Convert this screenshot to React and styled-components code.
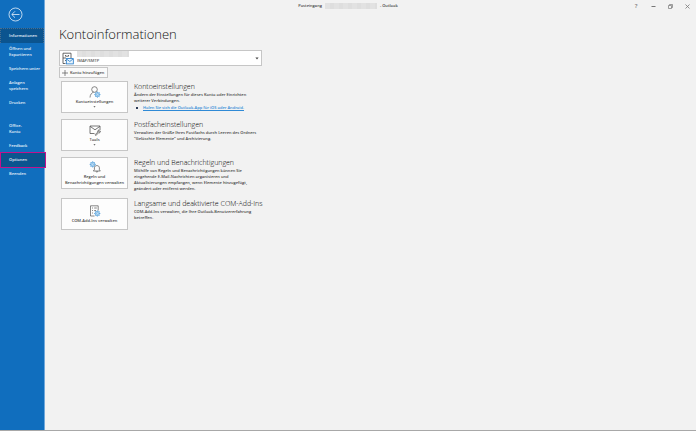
import React from 'react';
import styled, { createGlobalStyle } from 'styled-components';

const GlobalStyle = createGlobalStyle`
  * { box-sizing: border-box; }
  html, body { margin: 0; background: #F2F2F2; }
  body {
    font-family: 'Open Sans', 'Noto Sans', sans-serif;
    font-size: 4px;
    font-weight: 600;
    line-height: 6px;
    color: #444;
  }
  button, select { font: inherit; color: inherit; }
  h1, h2, p, ul { margin: 0; padding: 0; }
  svg { display: block; fill: none; flex-shrink: 0; }
`;

const Layout = styled.div`
  display: flex;
  min-height: 100vh;
  border-bottom: 1px solid #A8A8A8;
`;

const Sidebar = styled.nav`
  width: 45px;
  flex-shrink: 0;
  background: #106EBE;
  border-right: 1px solid #6FA8DC;
  color: #FFF;
`;

const BackButton = styled.button`
  display: block;
  padding: 0;
  margin: 7px 0 6px 8px;
  border: none;
  background: transparent;
`;

const NavLink = styled.a`
  display: block;
  padding: 4px 0 4px 9px;
  color: #E6F1FA;
  text-decoration: none;
  white-space: pre-line;
`;

const CurrentLink = styled(NavLink)`
  padding: 4px 0 4px 8px;
  margin-bottom: -1px;
  background: #0B548F;
  border: 1px dotted #4A6F8F;
  border-bottom-width: 0;
`;

const MarkedLink = styled(NavLink)`
  padding: 4px 0 4px 8px;
  margin: -1px -2px -1px 0;
  background: #0B548F;
  border: 1px solid #C3128C;
  position: relative;
`;

const NavGap = styled.div`
  height: 9px;
`;

const Main = styled.div`
  flex: 1;
  min-width: 0;
`;

const TitleBar = styled.header`
  display: grid;
  grid-template-columns: 1fr auto 1fr;
  align-items: center;
  height: 12px;
  margin-left: -45px;
  padding: 0 5px;
`;

const WindowTitle = styled.div`
  grid-column: 2;
  display: flex;
  align-items: center;
  gap: 3px;
`;

const Redacted = styled.span`
  display: block;
  width: 52px;
  height: 6px;
  background: repeating-linear-gradient(90deg, #E2E2E2 0 5px, #DEDEDE 5px 9px);
`;

const WindowControls = styled.div`
  display: flex;
  justify-content: flex-end;
  gap: 9px;
`;

const ControlButton = styled.button`
  width: 8px;
  height: 8px;
  padding: 0;
  border: none;
  background: transparent;
  display: flex;
  align-items: center;
  justify-content: center;
  font-size: 6px;
  color: #777;
`;

const Content = styled.main`
  padding: 12px 14px;
`;

const Title = styled.h1`
  font-size: 13px;
  font-weight: 300;
  line-height: 20px;
  color: #111;
  margin-bottom: 6px;
`;

const AccountBox = styled.div`
  display: flex;
  align-items: center;
  gap: 3px;
  max-width: 203px;
  height: 16px;
  padding: 0 2px;
  background: #FFF;
  border: 1px solid #C6C6C6;
`;

const AccountText = styled.div`
  flex: 1;
`;

const AccountSelect = styled.select`
  appearance: none;
  display: block;
  width: 100%;
  height: 8px;
  padding: 0;
  border: none;
  background: transparent;
  color: #555;
`;

const AddButton = styled.button`
  display: flex;
  align-items: center;
  gap: 2px;
  height: 11px;
  margin: 1px 0 3px;
  padding: 0 3px 0 2px;
  background: #FAFAFA;
  border: 1px solid #C6C6C6;
`;

const Sections = styled.div`
  display: flex;
  flex-direction: column;
  gap: 6px;
  padding-left: 2px;
`;

const Section = styled.section`
  display: flex;
  align-items: flex-start;
  gap: 6px;
`;

const Tile = styled.button`
  display: flex;
  flex-direction: column;
  align-items: center;
  justify-content: center;
  gap: 1px;
  width: 67px;
  height: 32px;
  padding: 0;
  flex-shrink: 0;
  background: #FDFDFD;
  border: 1px solid #C6C6C6;
  white-space: pre-line;
`;

const SectionText = styled.div`
  padding-top: 1px;
`;

const Heading = styled.h2`
  font-size: 7px;
  font-weight: 300;
  line-height: 9px;
  color: #000;
  margin-bottom: 1px;
`;

const Text = styled.p`
  white-space: pre-line;
`;

const LinkList = styled.ul`
  list-style: none;
  padding: 1px 0 0 2px;

  li {
    display: flex;
    align-items: center;
    gap: 5px;
  }

  li::before {
    content: '';
    width: 2px;
    height: 2px;
    background: #2B3A55;
  }

  a { color: #2F8AD6; }
`;

const BackIcon = () => (
  <svg width="15" height="15" viewBox="0 0 15 15" stroke="#E4EFF9" strokeWidth="0.8">
    <circle cx="7.5" cy="7.5" r="6.5" />
    <path d="M11.5 7.5H4M7 4.3L3.8 7.5 7 10.7" />
  </svg>
);

const AccountIcon = () => (
  <svg width="12" height="13" viewBox="0 0 12 13" stroke="#444" strokeWidth="0.8">
    <path d="M3.5 11.5H1V1.2H9V6M1 6H4M3.5 3V4.2H6.5V3M3 8.5H4" />
    <rect x="4.3" y="6.6" width="7" height="5.3" fill="#E8F3FC" stroke="#1E78C8" />
    <path d="M4.5 7L7.8 9.5 11 7" stroke="#1E78C8" />
  </svg>
);

const PlusIcon = () => (
  <svg width="6" height="6" viewBox="0 0 6 6" stroke="#555" strokeWidth="0.7">
    <path d="M3 0V6M0 3H6" />
  </svg>
);

const CaretIcon = ({ size = 4 }) => (
  <svg width={size} height={size - 1} viewBox="0 0 4 3">
    <path d="M0.4 0.5H3.6L2 2.4Z" fill="#444" />
  </svg>
);

const Gear = ({ x, y }) => (
  <g transform={`translate(${x} ${y})`} stroke="#4A9AD8">
    <circle r="2.2" fill="#B9DAF3" strokeWidth="0.6" />
    <path d="M0 -3V-2M0 2V3M-3 0H-2M2 0H3M-2.1 -2.1L-1.5 -1.5M1.5 1.5L2.1 2.1M-2.1 2.1L-1.5 1.5M1.5 -1.5L2.1 -2.1" strokeWidth="0.9" />
    <circle r="0.8" fill="#FFF" strokeWidth="0.5" />
  </g>
);

const UserIcon = () => (
  <svg width="12" height="12" viewBox="0 0 12 12" stroke="#555" strokeWidth="0.7">
    <circle cx="5.5" cy="3.5" r="2.8" />
    <path d="M1 11.5C1.2 8.5 2.6 6.8 4.6 6.2" />
    <Gear x={8.4} y={8.6} />
  </svg>
);

const ToolsIcon = () => (
  <svg width="12" height="12" viewBox="0 0 12 12" stroke="#555" strokeWidth="0.8">
    <path d="M5.5 9.5H1V2H11V6M1 2.3L6 5.8 11 2.3" />
    <path d="M6 10.8L8.8 8C8.3 6.8 9.3 5.8 10.3 6.1L9.5 7.2 10.3 8 11.4 7.2C11.6 8.3 10.5 9.2 9.5 8.9L6.8 11.5Z" fill="#FFF" />
  </svg>
);

const RulesIcon = () => (
  <svg width="12" height="12" viewBox="0 0 12 12" stroke="#555" strokeWidth="0.7">
    <Gear x={3.7} y={3.4} />
    <path d="M4.3 10H11.3L10.4 8.8V6.8C10.4 5.4 9.3 4.6 7.9 4.6S5.4 5.4 5.4 6.8V8.8ZM7 10.2C7.1 11.5 8.7 11.5 8.8 10.2" fill="#FDFDFD" />
  </svg>
);

const AddInIcon = () => (
  <svg width="12" height="12" viewBox="0 0 12 12" stroke="#555" strokeWidth="0.7">
    <path d="M5.5 11H1.5V0.8H9.2V5.5" />
    <path d="M3 3H4M5.2 3H7.8M3 5.5H4M5.2 5.5H7M3 8H4" />
    <Gear x={8.3} y={8.5} />
  </svg>
);

const sections = [
  {
    icon: <UserIcon />,
    label: 'Kontoeinstellungen',
    menu: true,
    title: 'Kontoeinstellungen',
    text: 'Ändern der Einstellungen für dieses Konto oder Einrichten\nweiterer Verbindungen.',
    link: 'Holen Sie sich die Outlook-App für iOS oder Android.',
  },
  {
    icon: <ToolsIcon />,
    label: 'Tools',
    menu: true,
    title: 'Postfacheinstellungen',
    text: 'Verwalten der Größe Ihres Postfachs durch Leeren des Ordners\n"Gelöschte Elemente" und Archivierung.',
  },
  {
    icon: <RulesIcon />,
    label: 'Regeln und\nBenachrichtigungen verwalten',
    title: 'Regeln und Benachrichtigungen',
    text: 'Mithilfe von Regeln und Benachrichtigungen können Sie\neingehende E-Mail-Nachrichten organisieren und\nAktualisierungen empfangen, wenn Elemente hinzugefügt,\ngeändert oder entfernt werden.',
  },
  {
    icon: <AddInIcon />,
    label: 'COM-Add-Ins verwalten',
    title: 'Langsame und deaktivierte COM-Add-Ins',
    text: 'COM-Add-Ins verwalten, die Ihre Outlook-Benutzererfahrung\nbetreffen.',
  },
];

function App() {
  return (
    <>
      <GlobalStyle />
      <Layout>
        <Sidebar>
          <BackButton type="button" aria-label="Zurück"><BackIcon /></BackButton>
          <CurrentLink href="#info">Informationen</CurrentLink>
          <NavLink href="#open">{'Öffnen und\nExportieren'}</NavLink>
          <NavLink href="#save">Speichern unter</NavLink>
          <NavLink href="#attachments">{'Anlagen\nspeichern'}</NavLink>
          <NavLink href="#print">Drucken</NavLink>
          <NavGap />
          <NavLink href="#account">{'Office-\nKonto'}</NavLink>
          <NavLink href="#feedback">Feedback</NavLink>
          <MarkedLink href="#options">Optionen</MarkedLink>
          <NavLink href="#exit">Beenden</NavLink>
        </Sidebar>

        <Main>
          <TitleBar>
            <WindowTitle>
              <span>Posteingang</span>
              <Redacted />
              <span>- Outlook</span>
            </WindowTitle>
            <WindowControls>
              <ControlButton type="button" aria-label="Hilfe">?</ControlButton>
              <ControlButton type="button" aria-label="Minimieren">
                <svg width="5" height="5" viewBox="0 0 5 5" stroke="currentColor"><path d="M0.5 2.5H4.5" /></svg>
              </ControlButton>
              <ControlButton type="button" aria-label="Wiederherstellen">
                <svg width="5" height="5" viewBox="0 0 5 5" stroke="currentColor" strokeWidth="0.7">
                  <path d="M0.5 1.5H3.5V4.5H0.5ZM1.5 1.5V0.5H4.5V3.5H3.5" />
                </svg>
              </ControlButton>
              <ControlButton type="button" aria-label="Schließen">
                <svg width="5" height="5" viewBox="0 0 5 5" stroke="currentColor" strokeWidth="0.8"><path d="M0.5 0.5L4.5 4.5M4.5 0.5L0.5 4.5" /></svg>
              </ControlButton>
            </WindowControls>
          </TitleBar>

          <Content>
            <Title>Kontoinformationen</Title>
            <AccountBox>
              <AccountIcon />
              <AccountText>
                <Redacted />
                <AccountSelect aria-label="Konto">
                  <option>IMAP/SMTP</option>
                </AccountSelect>
              </AccountText>
              <CaretIcon />
            </AccountBox>
            <AddButton type="button">
              <PlusIcon />
              Konto hinzufügen
            </AddButton>

            <Sections>
              {sections.map((s) => (
                <Section key={s.title}>
                  <Tile type="button">
                    {s.icon}
                    <span>{s.label}</span>
                    {s.menu && <CaretIcon size={3} />}
                  </Tile>
                  <SectionText>
                    <Heading>{s.title}</Heading>
                    <Text>{s.text}</Text>
                    {s.link && (
                      <LinkList>
                        <li><a href="#app">{s.link}</a></li>
                      </LinkList>
                    )}
                  </SectionText>
                </Section>
              ))}
            </Sections>
          </Content>
        </Main>
      </Layout>
    </>
  );
}

export default App;
